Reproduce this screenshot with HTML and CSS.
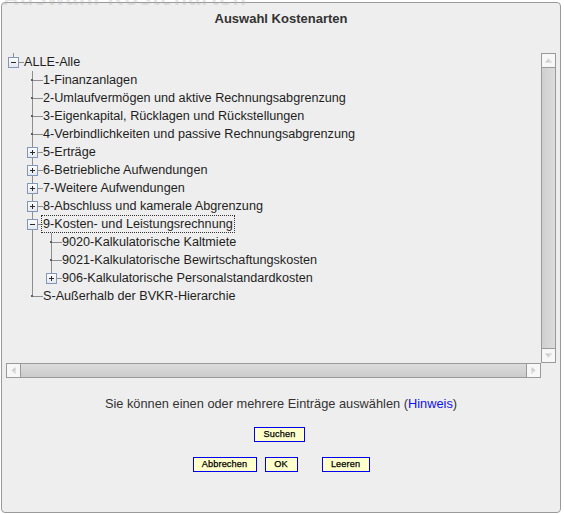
FILE: index.html
```html
<!DOCTYPE html>
<html lang="de">
<head>
<meta charset="utf-8">
<title>Auswahl Kostenarten</title>
<link rel="stylesheet" href="styles.css">
</head>
<body>
<div class="ghost">Auswahl Kostenarten</div>
<div class="dialog">
  <h1 class="title">Auswahl Kostenarten</h1>

  <div class="panel">
    <div class="viewport">
      <div class="row"><span class="j j-root"><span class="box minus"></span></span><span class="label">ALLE-Alle</span></div>
      <div class="row"><span class="j"></span><span class="j j-tee"></span><span class="label">1-Finanzanlagen</span></div>
      <div class="row"><span class="j"></span><span class="j j-tee"></span><span class="label">2-Umlaufvermögen und aktive Rechnungsabgrenzung</span></div>
      <div class="row"><span class="j"></span><span class="j j-tee"></span><span class="label">3-Eigenkapital, Rücklagen und Rückstellungen</span></div>
      <div class="row"><span class="j"></span><span class="j j-tee"></span><span class="label">4-Verbindlichkeiten und passive Rechnungsabgrenzung</span></div>
      <div class="row"><span class="j"></span><span class="j j-tee-box"><span class="box plus"></span></span><span class="label">5-Erträge</span></div>
      <div class="row"><span class="j"></span><span class="j j-tee-box"><span class="box plus"></span></span><span class="label">6-Betriebliche Aufwendungen</span></div>
      <div class="row"><span class="j"></span><span class="j j-tee-box"><span class="box plus"></span></span><span class="label">7-Weitere Aufwendungen</span></div>
      <div class="row"><span class="j"></span><span class="j j-tee-box"><span class="box plus"></span></span><span class="label">8-Abschluss und kamerale Abgrenzung</span></div>
      <div class="row"><span class="j"></span><span class="j j-tee-box"><span class="box minus"></span></span><span class="label focus">9-Kosten- und Leistungsrechnung</span></div>
      <div class="row"><span class="j"></span><span class="j j-pass"></span><span class="j j-tee"></span><span class="label">9020-Kalkulatorische Kaltmiete</span></div>
      <div class="row"><span class="j"></span><span class="j j-pass"></span><span class="j j-tee"></span><span class="label">9021-Kalkulatorische Bewirtschaftungskosten</span></div>
      <div class="row"><span class="j"></span><span class="j j-pass"></span><span class="j j-end-box"><span class="box plus"></span></span><span class="label">906-Kalkulatorische Personalstandardkosten</span></div>
      <div class="row"><span class="j"></span><span class="j j-end"></span><span class="label">S-Außerhalb der BVKR-Hierarchie</span></div>
    </div>

    <div class="vscroll">
      <span class="sbtn sbtn-v"><svg width="13" height="13" viewBox="0 0 13 13"><path d="M3 8.5 L6.5 4.5 L10 8.5 Z" fill="#c9c9c9"/><path d="M6.5 4.5 L10 8.5 L6.5 8.5 Z" fill="#dedede"/></svg></span>
      <span class="vthumb"></span>
      <span class="sbtn sbtn-v"><svg width="13" height="13" viewBox="0 0 13 13"><path d="M3 4.5 L6.5 8.5 L10 4.5 Z" fill="#c9c9c9"/><path d="M6.5 8.5 L10 4.5 L6.5 4.5 Z" fill="#dedede"/></svg></span>
    </div>
    <div class="hscroll">
      <span class="sbtn sbtn-h"><svg width="13" height="13" viewBox="0 0 13 13"><path d="M8.5 3 L4.5 6.5 L8.5 10 Z" fill="#c9c9c9"/><path d="M4.5 6.5 L8.5 10 L8.5 6.5 Z" fill="#dedede"/></svg></span>
      <span class="hthumb"></span>
      <span class="sbtn sbtn-h"><svg width="13" height="13" viewBox="0 0 13 13"><path d="M4.5 3 L8.5 6.5 L4.5 10 Z" fill="#c9c9c9"/><path d="M8.5 6.5 L4.5 10 L4.5 6.5 Z" fill="#dedede"/></svg></span>
    </div>
    <div class="corner"></div>
  </div>

  <p class="hint">Sie können einen oder mehrere Einträge auswählen (<a class="link" href="#">Hinweis</a>)</p>

  <div class="btnrow btnrow-top">
    <button class="btn btn-search" type="button">Suchen</button>
  </div>
  <div class="btnrow btnrow-bottom">
    <button class="btn btn-cancel" type="button">Abbrechen</button>
    <button class="btn btn-ok" type="button">OK</button>
    <button class="btn btn-clear" type="button">Leeren</button>
  </div>
</div>
</body>
</html>
```
FILE: styles.css
```css
html, body {
  margin: 0;
  padding: 0;
  background: #ffffff;
}

body {
  font-family: "Liberation Sans", Arial, sans-serif;
  color: #222;
  position: relative;
  overflow: hidden;
  height: 514px;
}

.ghost {
  position: absolute;
  top: -15px;
  left: 3px;
  z-index: 2;
  font-size: 22px;
  font-weight: bold;
  letter-spacing: 1px;
  color: rgba(180, 180, 180, 0.35);
  white-space: nowrap;
  pointer-events: none;
}

.dialog {
  box-sizing: border-box;
  margin: 2px 0 0 1px;
  width: 560px;
  height: 511px;
  border: 1px solid #9a9a9a;
  border-radius: 4px;
  background: #eeeeee;
  padding-top: 8px;
}

.title {
  margin: 0;
  font-size: 13px;
  font-weight: bold;
  line-height: 16px;
  text-align: center;
  color: #333;
}

.panel {
  --ln: #8e8e8e;
  --dot: #5e5e5e;
  margin: 26px 0 0 4px;
  width: 550px;
  height: 325px;
  display: grid;
  grid-template-columns: 535px 15px;
  grid-template-rows: 310px 15px;
}

.viewport {
  overflow: hidden;
  font-size: 12.65px;
  color: #1e1e1e;
}

.row {
  display: flex;
  align-items: center;
  height: 18px;
}

.j {
  flex: none;
  width: 19px;
  height: 18px;
  display: flex;
  align-items: center;
  background-repeat: no-repeat;
}

.j-pass {
  background-image: linear-gradient(var(--ln), var(--ln));
  background-position: 7px 0;
  background-size: 1px 100%;
}

.j-tee {
  background-image:
    linear-gradient(var(--dot), var(--dot)),
    linear-gradient(var(--ln), var(--ln)),
    linear-gradient(var(--ln), var(--ln));
  background-position: 6px 8px, 7px 0, 7px 9px;
  background-size: 2px 2px, 1px 100%, 11px 1px;
}

.j-end {
  background-image:
    linear-gradient(var(--dot), var(--dot)),
    linear-gradient(var(--ln), var(--ln)),
    linear-gradient(var(--ln), var(--ln));
  background-position: 6px 8px, 7px 0, 7px 9px;
  background-size: 2px 2px, 1px 10px, 11px 1px;
}

.j-tee-box {
  background-image:
    linear-gradient(var(--ln), var(--ln)),
    linear-gradient(var(--ln), var(--ln));
  background-position: 7px 0, 13px 9px;
  background-size: 1px 100%, 5px 1px;
}

.j-end-box,
.j-root {
  background-image:
    linear-gradient(var(--ln), var(--ln)),
    linear-gradient(var(--ln), var(--ln));
  background-position: 7px 0, 13px 9px;
  background-size: 1px 5px, 5px 1px;
}

.box {
  box-sizing: border-box;
  width: 11px;
  height: 11px;
  margin-left: 2px;
  margin-top: 1px;
  border: 1px solid #8497b8;
  background-repeat: no-repeat;
}

.minus {
  background-image:
    linear-gradient(#2a2a2a, #2a2a2a),
    linear-gradient(#fbfbfb, #e4e8ee);
  background-position: 2px 4px, 0 0;
  background-size: 5px 1px, 100% 100%;
}

.plus {
  background-image:
    linear-gradient(#2a2a2a, #2a2a2a),
    linear-gradient(#2a2a2a, #2a2a2a),
    linear-gradient(#fbfbfb, #e4e8ee);
  background-position: 2px 4px, 4px 2px, 0 0;
  background-size: 5px 1px, 1px 5px, 100% 100%;
}

.label {
  margin-left: -3px;
  padding: 0 1px;
  border: 1px dotted transparent;
  line-height: 16px;
  white-space: nowrap;
}

.label.focus {
  border-color: #333;
}

.vscroll {
  display: flex;
  flex-direction: column;
}

.hscroll {
  display: flex;
}

.sbtn {
  flex: none;
  box-sizing: border-box;
  width: 15px;
  height: 15px;
  border: 1px solid #9a9a9a;
  background: #f7f7f7;
  display: flex;
  align-items: center;
  justify-content: center;
}

.sbtn svg {
  display: block;
}

.vthumb {
  flex: 1;
  border-left: 1px solid #9a9a9a;
  border-right: 1px solid #9a9a9a;
  background: linear-gradient(to right, #cfcfcf, #dcdcdc);
}

.hthumb {
  flex: 1;
  border-top: 1px solid #9a9a9a;
  border-bottom: 1px solid #9a9a9a;
  background: linear-gradient(to bottom, #dcdcdc, #cbcbcb);
}

.hint {
  margin: 18px 0 0;
  font-size: 12.8px;
  line-height: 16px;
  text-align: center;
  color: #333;
}

.link {
  color: #1010ee;
  text-decoration: none;
}

.btnrow {
  display: flex;
  justify-content: center;
}

.btnrow-top {
  margin-top: 15px;
  padding-right: 3px;
}

.btnrow-bottom {
  margin-top: 15px;
}

.btn {
  box-sizing: border-box;
  height: 15px;
  padding: 0;
  margin: 0;
  border: 1px solid #0000f0;
  border-radius: 0;
  background: #ffffcc;
  color: #000;
  font-family: "Liberation Sans", Arial, sans-serif;
  font-size: 9.2px;
  font-weight: normal;
  -webkit-text-stroke: 0.25px #000;
  letter-spacing: 0.1px;
  line-height: 13px;
  text-align: center;
}

.btn-search { width: 51px; }
.btn-cancel { width: 64px; }
.btn-ok { width: 33px; margin-left: 8px; }
.btn-clear { width: 48px; margin-left: 24px; }
```
